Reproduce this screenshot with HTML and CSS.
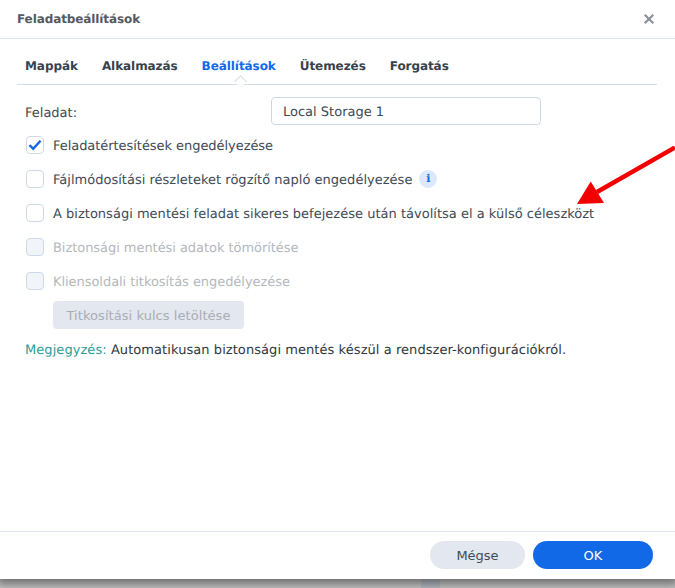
FILE: index.html
```html
<!DOCTYPE html>
<html lang="hu">
<head>
<meta charset="utf-8">
<title>Feladatbeállítások</title>
<link rel="stylesheet" href="styles.css">
</head>
<body>
<div class="backdrop-block"></div>
<div class="dialog">
  <header class="titlebar">
    <span class="title">Feladatbeállítások</span>
    <svg class="close" width="12" height="12" viewBox="0 0 12 12"><path d="M1.700 1.700 10.300 10.300M10.300 1.700 1.700 10.300" stroke="#8b929b" stroke-width="2.200" fill="none"/></svg>
  </header>
  <main class="content">
    <nav class="tabs">
      <span class="tab">Mappák</span>
      <span class="tab">Alkalmazás</span>
      <span class="tab active">Beállítások</span>
      <span class="tab">Ütemezés</span>
      <span class="tab">Forgatás</span>
    </nav>
    <div class="field">
      <label class="field-label">Feladat:</label>
      <div class="input">Local Storage 1</div>
    </div>
    <div class="options">
      <div class="option">
        <span class="box">
          <svg width="14" height="12" viewBox="0 0 14 12"><path d="M1.500 6.200 5.200 9.800 12.500 1.800" stroke="#1269e8" stroke-width="2.400" fill="none"/></svg>
        </span>
        <span class="label">Feladatértesítések engedélyezése</span>
      </div>
      <div class="option wide">
        <span class="box"></span>
        <span class="label">Fájlmódosítási részleteket rögzítő napló engedélyezése</span>
        <span class="info">i</span>
      </div>
      <div class="option wide">
        <span class="box"></span>
        <span class="label">A biztonsági mentési feladat sikeres befejezése után távolítsa el a külső céleszközt</span>
      </div>
      <div class="option disabled">
        <span class="box"></span>
        <span class="label">Biztonsági mentési adatok tömörítése</span>
      </div>
      <div class="option disabled">
        <span class="box"></span>
        <span class="label">Kliensoldali titkosítás engedélyezése</span>
      </div>
    </div>
    <button class="key-btn" type="button">Titkosítási kulcs letöltése</button>
    <p class="note"><span class="note-key">Megjegyzés:</span> Automatikusan biztonsági mentés készül a rendszer-konfigurációkról.</p>
  </main>
  <footer class="footer">
    <button class="btn cancel" type="button">Mégse</button>
    <button class="btn ok" type="button">OK</button>
  </footer>
</div>
<svg class="arrow" width="100" height="60" viewBox="575 146 100 60"><path d="M597 192 675 147.500" stroke="#f50000" stroke-width="4.500" fill="none"/><path d="M577 204 590.700 181.500 604 203Z" fill="#f50000"/></svg>
</body>
</html>
```
FILE: styles.css
```css
* { box-sizing: border-box; }
html, body { margin: 0; height: 588px; overflow: hidden; }
body {
  position: relative;
  background: #c4c4c4;
  font-family: "DejaVu Sans", sans-serif;
  font-size: 13px;
  color: #414b55;
  text-rendering: geometricPrecision;
}
.backdrop-block {
  position: absolute;
  left: 421px;
  top: 579px;
  width: 19px;
  height: 9px;
  background: #b4bac2;
}
.dialog {
  position: relative;
  width: 675px;
  height: 579px;
  background: #fff;
  display: flex;
  flex-direction: column;
  box-shadow: 0 2px 9px 3px rgba(0,0,0,.45);
}
.titlebar {
  height: 39px;
  flex: none;
  padding: 0 20px 0 17px;
  display: flex;
  align-items: center;
  justify-content: space-between;
  border-bottom: 1px solid #dfe5ec;
}
.title { font-size: 12px; font-weight: 700; color: #525a64; letter-spacing: -0.1px; }
.content { flex: 1; padding: 0 18px 0 17px; }
.tabs {
  height: 46px;
  display: flex;
  align-items: center;
  gap: 24px;
  padding: 9px 0 0 8px;
  border-bottom: 1px solid #d3dce7;
  position: relative;
}
.tab { font-weight: 700; font-size: 12px; color: #38424d; letter-spacing: -0.07px; }
.tab.active { color: #1269e8; position: relative; }
.tab.active::after {
  content: "";
  position: absolute;
  left: 50%;
  bottom: -13px;
  width: 8px;
  height: 8px;
  margin-left: -3px;
  background: #fff;
  border-left: 1px solid #d3dce7;
  border-top: 1px solid #d3dce7;
  transform: rotate(45deg);
}
.field { display: flex; align-items: center; margin-top: 12px; height: 28px; padding-left: 8px; }
.field-label { width: 246px; padding-top: 4px; }
.input {
  width: 270px;
  height: 28px;
  line-height: 28px;
  padding: 1px 0 0 11px;
  border: 1px solid #cfd9e5;
  border-radius: 4px;
}
.options { margin-top: 11px; display: flex; flex-direction: column; gap: 16px; padding-left: 9px; }
.option { display: flex; align-items: center; height: 18px; gap: 9px; white-space: nowrap; letter-spacing: -0.05px; }
.option.wide { letter-spacing: 0.015px; }
.label { padding-top: 2px; }
.box {
  width: 18px;
  height: 18px;
  flex: none;
  display: flex;
  align-items: center;
  justify-content: center;
  border: 1px solid #cfd9e5;
  border-radius: 4px;
  background: #fff;
}
.option.disabled { color: #b4b8bd; }
.option.disabled .box { background: #f1f4f8; }
.info {
  width: 18px;
  height: 18px;
  margin-left: -2px;
  border-radius: 50%;
  background: #dce8fb;
  color: #1269e8;
  font-family: "DejaVu Serif", serif;
  font-size: 11px;
  font-weight: 700;
  line-height: 18px;
  text-align: center;
}
.key-btn {
  display: block;
  margin: 11px 0 0 36px;
  width: 191px;
  height: 28px;
  border: 0;
  border-radius: 4px;
  background: #e3e7ef;
  color: #a9adb4;
  font: 13px "DejaVu Sans", sans-serif;
  letter-spacing: 0.06px;
  padding: 0;
}
.note { margin: 14px 0 0 8px; height: 16px; line-height: 16px; color: #2f3842; white-space: nowrap; letter-spacing: 0.065px; }
.note-key { color: #2f9d9a; }
.footer {
  height: 48px;
  flex: none;
  border-top: 1px solid #dfe5ec;
  display: flex;
  justify-content: flex-end;
  gap: 8px;
  padding: 9px 22px 0 0;
}
.btn {
  height: 28px;
  border: 0;
  border-radius: 14px;
  font: 13px "DejaVu Sans", sans-serif;
  padding: 0;
}
.cancel { width: 95px; background: #e3e7ef; color: #414b55; }
.ok { width: 120px; background: #1269e8; color: #fff; }
.arrow { position: absolute; left: 575px; top: 146px; }
```
